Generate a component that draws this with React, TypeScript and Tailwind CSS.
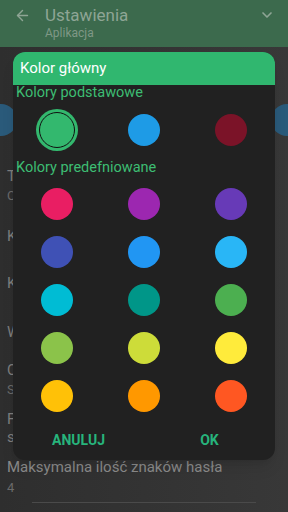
import { ArrowLeft, ChevronDown } from 'lucide-react';

const BASIC = ['#33b86e', '#1e9be6', '#7b1328'];
const PREDEFINED = [
  '#e91e63', '#9c27b0', '#673ab7',
  '#3f51b5', '#2196f3', '#29b6f6',
  '#00bcd4', '#009688', '#4caf50',
  '#8bc34a', '#cddc39', '#ffeb3b',
  '#ffc107', '#ff9800', '#ff5722',
];

function Swatch({ color, selected }: { color: string; selected?: boolean }) {
  if (selected) {
    return (
      <div className="w-[42px] h-[42px] rounded-full flex items-center justify-center" style={{ backgroundColor: color }}>
        <div className="w-[36px] h-[36px] rounded-full border-[1.5px] border-[#111]" />
      </div>
    );
  }
  return <div className="w-8 h-8 rounded-full" style={{ backgroundColor: color }} />;
}

export default function App() {
  return (
    <div className="relative w-[288px] h-[512px] overflow-hidden bg-[#363636] font-['Roboto',sans-serif]">
      {/* settings page behind the dialog (dimmed) */}
      <div className="h-[47px] bg-[#3c6a4d] flex items-start pt-[5px]">
        <ArrowLeft className="ml-[14px] mt-[2px] w-[17px] h-[17px] text-[#8ea595]" strokeWidth={2} />
        <div className="ml-[14px]">
          <div className="text-[17px] leading-[20px] text-[#8ea595]">Ustawienia</div>
          <div className="text-[12px] leading-[16px] text-[#7f9886]">Aplikacja</div>
        </div>
        <ChevronDown className="ml-auto mr-[13px] mt-[2px] w-[16px] h-[16px] text-[#8ea595]" strokeWidth={2.5} />
      </div>
      <div className="bg-gradient-to-r from-[#2e2e2e] to-[#383838] h-[465px] px-[7px] text-[#7d7d7d]">
        <div className="flex justify-between pt-[57px] -mx-[22px]">
          <div className="w-8 h-8 rounded-full bg-[#2a5a7a]" />
          <div className="w-8 h-8 rounded-full bg-[#2a5a7a]" />
        </div>
        <div className="mt-[30px] text-[15px] leading-[20px]">T</div>
        <div className="text-[13px] leading-[20px] text-[#6a6a6a]">C</div>
        <div className="mt-[20px] text-[15px] leading-[20px]">K</div>
        <div className="mt-[27px] text-[15px] leading-[20px]">K</div>
        <div className="mt-[29px] text-[15px] leading-[20px]">W</div>
        <div className="mt-[18px] text-[15px] leading-[20px]">C</div>
        <div className="text-[13px] leading-[20px] text-[#6a6a6a]">S</div>
        <div className="mt-[10px] text-[15px] leading-[18px]">F</div>
        <div className="text-[15px] leading-[18px]">s</div>
        <div className="mt-[11px] text-[15px] leading-[20px] text-[#8a8a8a]">Maksymalna ilość znaków hasła</div>
        <div className="mt-[1px] text-[13px] leading-[20px] text-[#6a6a6a]">4</div>
        <div className="mt-[4px] mx-[25px] h-px bg-[#4a4a4a]" />
      </div>

      {/* dialog */}
      <div className="absolute left-[13px] top-[52px] w-[262px] h-[408px] rounded-[12px] overflow-hidden bg-[#212121] shadow-lg">
        <div className="h-[33px] bg-[#30b76f] flex items-center pl-[7px] text-[15px] text-white">Kolor główny</div>
        <div className="pl-[3px] text-[14.5px] leading-[16px] text-[#3dbd73]">Kolory podstawowe</div>
        <div className="grid grid-cols-3 mt-[7px] h-[44px]">
          {BASIC.map((c, i) => (
            <div key={c} className="flex items-center justify-center">
              <Swatch color={c} selected={i === 0} />
            </div>
          ))}
        </div>
        <div className="mt-[8px] pl-[3px] text-[14.5px] leading-[16px] text-[#3dbd73]">Kolory predefniowane</div>
        <div className="grid grid-cols-3 mt-[12px] gap-y-[16px]">
          {PREDEFINED.map(c => (
            <div key={c} className="flex justify-center">
              <Swatch color={c} />
            </div>
          ))}
        </div>
        <div className="grid grid-cols-2 mt-[18px]">
          <div className="text-center text-[14px] font-bold text-[#27b47c]">ANULUJ</div>
          <div className="text-center text-[14px] font-bold text-[#27b47c]">OK</div>
        </div>
      </div>
    </div>
  );
}
